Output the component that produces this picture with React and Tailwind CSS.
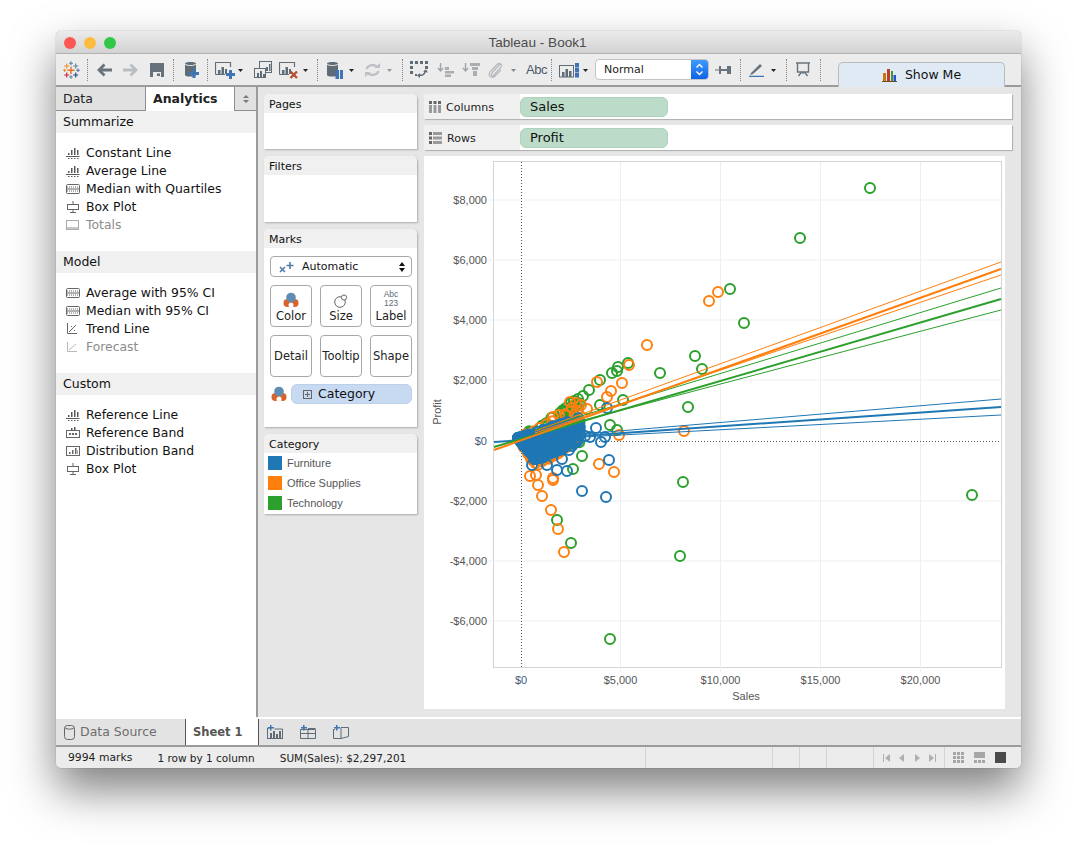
import React from "react";

const BLUE = "#1f77b4", ORANGE = "#ff7f0e", GREEN = "#2ca02c";
const G = "#5f6b75";

const green = [[870,188],[800,238],[730,289],[744,323],[660,373],[695,356],[702,369],[688,407],[628,363],[618,367],[617,371],[612,373],[600,380],[589,390],[623,400],[600,405],[610,425],[617,430],[582,456],[573,469],[683,482],[972,495],[680,556],[571,543],[557,520],[610,639],[583,396],[578,399],[574,401],[571,403],[566,408],[560,413]];
const orange = [[709,301],[718,292],[647,345],[629,365],[622,383],[611,391],[607,397],[597,382],[684,431],[619,435],[599,464],[614,472],[553,480],[553,478],[538,485],[542,496],[551,510],[558,529],[564,552],[530,476],[536,475],[570,402],[576,403],[587,409],[581,405],[572,408],[547,424],[553,417],[559,415]];
const blue = [[607,408],[596,428],[590,437],[601,442],[605,437],[577,441],[569,450],[562,459],[609,460],[532,465],[547,465],[557,470],[567,471],[582,491],[606,497],[572,446],[560,450],[585,436]];

function mulberry(a) {
  return () => {
    a |= 0; a = (a + 0x6d2b79f5) | 0;
    let t = Math.imul(a ^ (a >>> 15), 1 | a);
    t = (t + Math.imul(t ^ (t >>> 7), 61 | t)) ^ t;
    return ((t ^ (t >>> 14)) >>> 0) / 4294967296;
  };
}
function fan(seed, n, xMax, upS, lowS, peak, dec, pow) {
  const r = mulberry(seed), out = [];
  for (let i = 0; i < n; i++) {
    const d = Math.pow(r(), pow) * xMax;
    const up = 438 - upS * d;
    const low = 438 + (d < peak ? lowS * d : lowS * peak - (d - peak) * dec);
    out.push([518 + d, up + (low - up) * r()]);
  }
  return out;
}
const gMass = fan(3, 90, 62, 0.62, 1.1, 22, 0.5, 1);
const oMass = fan(7, 120, 60, 0.5, 1.6, 18, 0.6, 1.2);
const bMass = fan(11, 420, 62, 0.33, 1.35, 17, 0.45, 1.2);

function Rings({ pts, color }) {
  return pts.map(([x, y], i) => (
    <circle key={i} cx={x} cy={y} r="5" fill="none" stroke={color} strokeWidth="2" />
  ));
}

function Chart() {
  const vg = [620.5, 720.5, 820.5, 920.5];
  const hg = [200, 260, 320, 380, 501, 561, 621];
  const yl = [["$8,000",200],["$6,000",260],["$4,000",320],["$2,000",380],["$0",441],["-$2,000",501],["-$4,000",561],["-$6,000",621]];
  const xl = [["$0",521],["$5,000",620.5],["$10,000",720.5],["$15,000",820.5],["$20,000",920.5]];
  return (
    <svg width="581" height="553" viewBox="424 156 581 553" className="block" style={{ fontFamily: "'Liberation Sans', sans-serif" }}>
      <rect x="493.5" y="161.5" width="508" height="506" fill="#fff" stroke="#d4d4d4" />
      {vg.map((x) => <line key={x} x1={x} x2={x} y1="162" y2="672" stroke="#efefef" />)}
      {hg.map((y) => <line key={y} y1={y} y2={y} x1="488" x2="1001" stroke="#efefef" />)}
      <line x1="521.5" x2="521.5" y1="162" y2="667" stroke="#555" strokeDasharray="1 2" />
      <line x1="494" x2="1000" y1="441.5" y2="441.5" stroke="#555" strokeDasharray="1 2" />
      <Rings pts={gMass} color={GREEN} />
      <Rings pts={green} color={GREEN} />
      <Rings pts={oMass} color={ORANGE} />
      <Rings pts={orange} color={ORANGE} />
      <Rings pts={bMass} color={BLUE} />
      <Rings pts={blue} color={BLUE} />
      <path d="M535 438 L1001 399 M535 439.5 L1001 415" stroke={BLUE} fill="none" />
      <path d="M494 442 L1001 407" stroke={BLUE} strokeWidth="2" fill="none" />
      <path d="M535 430 L1001 288 M535 433 L1001 310" stroke={GREEN} fill="none" />
      <path d="M494 447 L1001 299" stroke={GREEN} strokeWidth="2" fill="none" />
      <path d="M535 431 L1001 262 M535 433 L1001 275" stroke={ORANGE} fill="none" />
      <path d="M494 450 L1001 269" stroke={ORANGE} strokeWidth="2.100" fill="none" />
      {yl.map(([t, y]) => (
        <text key={t} x="487" y={y + 4} textAnchor="end" fontSize="11" fill={t === "$0" ? "#44587a" : "#555"}>{t}</text>
      ))}
      {xl.map(([t, x]) => (
        <text key={t} x={x} y="684" textAnchor="middle" fontSize="11" fill={t === "$0" ? "#44587a" : "#555"}>{t}</text>
      ))}
      <text x="746" y="700" textAnchor="middle" fontSize="11" fill="#555">Sales</text>
      <text transform="translate(441 412) rotate(-90)" textAnchor="middle" fontSize="11" fill="#555">Profit</text>
    </svg>
  );
}

const Ic = ({ w = 16, h = 16, children, className = "" }) => (
  <svg width={w} height={h} viewBox={`0 0 ${w} ${h}`} className={`shrink-0 block ${className}`}>{children}</svg>
);
const Caret = ({ c = "#222" }) => (
  <svg width="5" height="3" viewBox="0 0 5 3" className="shrink-0 block mt-[1px]"><path d="M0 0h5L2.5 3z" fill={c} /></svg>
);
const Sep = () => <div className="w-[1px] h-[22px] border-l border-dotted border-[#888] shrink-0" />;
const Gap = ({ w }) => <div className="shrink-0" style={{ width: w }} />;

const Bars = ({ x = 0, y = 0, c = G }) => (
  <g transform={`translate(${x} ${y})`} fill="none" stroke={c}>
    <path d="M.5 12.500V.5h15V5" strokeWidth="1.200" />
    <path d="M.5 12.500H10" />
    <path d="M3 12V8h2.500v4zM6.500 12V5H9v7zM10 12V7h2v5z" fill={c} stroke="none" />
  </g>
);

const Plus = ({ x, y, s, c }) => (
  <path d={`M${x - s} ${y}H${x + s}M${x} ${y - s}V${y + s}`} stroke={c} strokeWidth={s > 2.5 ? 1.5 : 1.1} fill="none" />
);

function Toolbar() {
  return (
    <div className="h-[33px] flex items-center bg-[#ececec] border-b-2 border-[#9b9b9b] relative pl-[7px] shrink-0">
      <Ic w={17} h={18}>
        <Plus x={8} y={2.3} s={2} c="#5b879b" />
        <Plus x={12.7} y={5} s={2.5} c="#5b879b" />
        <Plus x={3.7} y={5} s={2.5} c="#eb912b" />
        <Plus x={8} y={9.3} s={3.6} c="#e8762b" />
        <Plus x={1.6} y={9.3} s={1.6} c="#eb912b" />
        <Plus x={15} y={9.3} s={1.8} c="#4e79a7" />
        <Plus x={3.7} y={14} s={2.5} c="#c72035" />
        <Plus x={12.7} y={14} s={2.5} c="#1f447f" />
        <Plus x={8} y={16} s={1.8} c="#5b879b" />
      </Ic>
      <Gap w={7} /><Sep /><Gap w={9} />
      <Ic w={15} h={14}><path d="M15 7H2M7.500 1.500 2 7l5.500 5.500" stroke="#69737c" strokeWidth="2.800" fill="none" /></Ic>
      <Gap w={11} />
      <Ic w={15} h={14}><path d="M0 7h13M7.500 1.500 13 7l-5.500 5.500" stroke="#b9bec3" strokeWidth="2.800" fill="none" /></Ic>
      <Gap w={12} />
      <Ic w={14} h={14}><path d="M0 0h14v14H0z" fill="#66717b" /><path d="M3 9h8v5H3z" fill="#ececec" /><path d="M7 10.500h3V13H7z" fill="#66717b" /></Ic>
      <Gap w={9} /><Sep /><Gap w={11} />
      <Ic w={14} h={17}><path d="M0 2.500C0 .5 11 .5 11 2.500V14c0 2-11 2-11 0z" fill="#5f6b75" /><path d="M0 3c1 2 10 2 11 0" stroke="#ececec" fill="none" /><path d="M4 11h3.500V7.500h3V11H14v3h-3.500v3h-3v-3H4z" fill="#3f75b4" /></Ic>
      <Gap w={8} /><Sep /><Gap w={7} />
      <Ic w={20} h={18}><Bars y={1} /><path d="M11 12h3V9h3v3h3v3h-3v3h-3v-3h-3z" fill="#3f75b4" /></Ic>
      <Gap w={3} /><Caret />
      <Gap w={11} />
      <Ic w={18} h={18}><rect x="5.500" y=".5" width="12" height="11" fill="#ececec" stroke={G} /><rect x=".5" y="7.500" width="11" height="9" fill="#ececec" stroke={G} /><path d="M3 16v-4h2v4zM6 16v-6h2v6zM9 16v-3h2v3zM12 10V6h2v4zM15 10V3h1.500v7z" fill={G} /></Ic>
      <Gap w={7} />
      <Ic w={19} h={18}><Bars y={1} /><path d="M11.500 10.500l6.500 6.500m0-6.500-6.500 6.500" stroke="#b4502f" strokeWidth="2.400" /></Ic>
      <Gap w={5} /><Caret />
      <Gap w={9} /><Sep /><Gap w={9} />
      <Ic w={16} h={18}><path d="M0 2.500C0 .5 11 .5 11 2.500V14c0 2-11 2-11 0z" fill="#5f6b75" /><path d="M0 3c1 2 10 2 11 0" stroke="#ececec" fill="none" /><path d="M8.500 9H12v9H8.500zM13 9h3v9h-3z" fill="#3f75b4" /></Ic>
      <Gap w={6} /><Caret />
      <Gap w={11} />
      <Ic w={15} h={14}><path d="M1.500 6a6 5 0 0 1 10-2.500M13.500 8a6 5 0 0 1-10 2.500" stroke="#bdc1c5" strokeWidth="2.400" fill="none" /><path d="M9.500 5H15V0zM5.500 9H0v5z" fill="#bdc1c5" /></Ic>
      <Gap w={7} /><Caret c="#999" />
      <Gap w={10} /><Sep /><Gap w={7} />
      <Ic w={18} h={17}><path d="M0 0h3v3H0zM5 0h3v3H5zM10 0h3v3h-3zM15 0h3v3h-3zM0 5h3v3H0zM0 10h3v3H0zM5 13h2v2H5zM15 5h3v3h-3z" fill={G} /><path d="M15 9a4 4 0 0 1-5 5" stroke={G} strokeWidth="1.500" fill="none" /><path d="M13 11l3-2.500 2 3zM10 12v5l-3-2.500z" fill={G} /></Ic>
      <Gap w={9} />
      <Ic w={17} h={15}><path d="M3.500 1v8M1 6l2.500 3L6 6" stroke="#9fa5ab" strokeWidth="1.400" fill="none" /><path d="M8 5h4v3H8zM8 9h9v2.500H8zM8 12.500h6V15H8z" fill="#a9aeb3" /></Ic>
      <Gap w={8} />
      <Ic w={18} h={15}><path d="M3.500 1v8M1 6l2.500 3L6 6" stroke="#9fa5ab" strokeWidth="1.400" fill="none" /><path d="M8 1h10v3H8zM10 5h6v3h-6zM11 9h4v5h-4z" fill="#a9aeb3" /></Ic>
      <Gap w={7} />
      <Ic w={16} h={17}><path d="M13 3 5 12c-2 2 0 4 2 2l7-8c1.500-2-1-5-3.500-3L3 11c-3 4 2 7 5 4l6-6" stroke="#b5b9bd" strokeWidth="1.200" fill="none" /></Ic>
      <Gap w={8} /><Caret c="#888" />
      <Gap w={10} />
      <span className="text-[13px] text-[#4d5a6a] font-['Liberation_Sans',sans-serif] w-[20px] leading-none tracking-[-0.5px] whitespace-nowrap">Abc</span>
      <Gap w={5} /><Sep /><Gap w={7} />
      <Ic w={20} h={16}><rect x=".5" y="3.500" width="14" height="11.500" fill="none" stroke={G} /><path d="M3 15v-5h2.500v5zM6.500 15V7H9v8zM10 15V9h2.500v6z" fill={G} /><path d="M16 1h4v4.500h-4zM16 6h4v4.500h-4zM16 11h4v4.500h-4z" fill="#3f75b4" /></Ic>
      <Gap w={4} /><Caret />
      <Gap w={7} />
      <div className="w-[114px] h-[21px] rounded-[4px] bg-white border border-[#c4c4c4] flex items-center relative overflow-hidden shrink-0">
        <span className="text-[11px] text-[#222] pl-[8px] font-['DejaVu_Sans',sans-serif] leading-none">Normal</span>
        <div className="absolute right-0 top-0 bottom-0 w-[17px] bg-gradient-to-b from-[#3f9bfb] to-[#0f62e6] flex items-center justify-center">
          <svg width="9" height="13" viewBox="0 0 9 13"><path d="M1.500 4.500 4.500 1.500l3 3M1.500 8.500l3 3 3-3" stroke="#fff" strokeWidth="1.400" fill="none" /></svg>
        </div>
      </div>
      <Gap w={6} />
      <Ic w={16} h={12}><path d="M0 5.500h4V2h2v3h6V2h4v8h-4V7H6v3H4V6.500H0z" fill="#69737c" /></Ic>
      <Gap w={9} /><Sep /><Gap w={8} />
      <Ic w={15} h={15}><path d="M2 11 11 2l2 2-9 8-3 1z" fill="#69737c" /><path d="M0 14.500h15" stroke="#3f75b4" strokeWidth="1.500" /></Ic>
      <Gap w={7} /><Caret />
      <Gap w={10} /><Sep /><Gap w={8} />
      <Ic w={16} h={15}><path d="M1 1h14M2.500 1v9h11V1M8 10v2M3.500 14l3-4M12.500 14l-3-4" stroke="#69737c" strokeWidth="1.400" fill="none" /></Ic>
      <Gap w={9} /><Sep />
      <div className="absolute left-[782px] bottom-[-2px] w-[167px] h-[25px] bg-[#dfeaf5] border border-b-0 border-[#b8bcc0] rounded-t-[5px] flex items-center justify-center gap-[8px]">
        <svg width="15" height="14" viewBox="0 0 15 14" className="block">
          <path d="M1 5h3v8H1z" fill="#c7770a" /><path d="M5 1h3v12H5z" fill="#c0392b" /><path d="M9 3h2v10H9z" fill="#3a9a32" /><path d="M11.500 7H14v6h-2.500z" fill="#2a4fd6" /><path d="M0 13.500h15" stroke="#6b4f1d" />
        </svg>
        <span className="text-[12.500px] text-[#111] font-['DejaVu_Sans',sans-serif] leading-none">Show Me</span>
      </div>
    </div>
  );
}

const ic = {
  line: <Ic w={14} h={12}><path d="M8 1h1.500v7H8zM5 3h1.500v5H5zM11 3h1.500v5H11zM2 6h1.500v2H2zM0 9h13.500v1H0zM2 11h1.500v1H2zM5 11h1.500v1H5zM8 11h1.500v1H8zM11 11h1.500v1H11z" fill="#5a5a5a" /></Ic>,
  quart: <Ic w={14} h={12}><rect x=".5" y="1.500" width="13" height="9" rx="1" fill="none" stroke="#666" /><path d="M1 4h12M1 8h12" stroke="#666" strokeDasharray="1 1" /><path d="M1 6h12" stroke="#666" /></Ic>,
  box: <Ic w={14} h={12}><path d="M7 0v3M7 9v3M4 11.500h6" stroke="#666" fill="none" /><rect x="1.500" y="3.500" width="11" height="5" fill="none" stroke="#666" /></Ic>,
  totals: <Ic w={14} h={12}><rect x=".5" y="1.500" width="12" height="9" fill="none" stroke="#aaa" /><path d="M1 8h11v2H1z" fill="#c8c8c8" /></Ic>,
  trend: <Ic w={14} h={12}><path d="M1.500 0v10.500H11M3 9l7-7" stroke="#666" fill="none" /><path d="M5 3h1v1H5zM8 7h1v1H8z" fill="#666" /></Ic>,
  forecast: <Ic w={14} h={12}><path d="M1.500 1v9.500H11M3 9l7-6" stroke="#b9b9b9" fill="none" /></Ic>,
  band: <Ic w={14} h={12}><path d="M8 0h1.500v3H8zM5 1h1.500v2H5z" fill="#5a5a5a" /><rect x=".5" y="3.500" width="13" height="7" fill="none" stroke="#666" /><path d="M3 6h2v2H3zM6 6h2v2H6zM9 6h2v2H9z" fill="#666" /></Ic>,
  dist: <Ic w={14} h={12}><rect x=".5" y="1.500" width="13" height="9" fill="none" stroke="#666" /><path d="M3 7h1.500v2H3zM6 5h1.500v4H6zM9 3h1.500v6H9zM11.500 5H12v4h-.5z" fill="#666" /></Ic>,
};

function Section({ title, items }) {
  return (
    <div>
      <div className="h-[22px] bg-[#f0f0f0] flex items-center pl-[7px] pt-[1px] text-[12.500px] text-[#111] leading-none">{title}</div>
      <div className="pt-[11px] pb-[17px]">
        {items.map(([t, i, dis]) => (
          <div key={t} className="h-[18px] flex items-center pl-[10px] gap-[6px]">
            <div className="w-[14px] flex justify-center">{i}</div>
            <span className={`text-[12.400px] leading-none ${dis ? "text-[#8c8c8c]" : "text-[#111]"}`}>{t}</span>
          </div>
        ))}
      </div>
    </div>
  );
}

function LeftPane() {
  return (
    <div className="w-[202px] shrink-0 bg-white border-r-2 border-[#9b9b9b] flex flex-col">
      <div className="h-[24px] flex bg-[#e1e1e1] shrink-0">
        <div className="w-[90px] border-b border-r border-[#8f8f8f] flex items-center pl-[7px] pt-[2px] text-[12.500px] text-[#222]">Data</div>
        <div className="w-[89px] bg-white flex items-center pl-[7px] pt-[1px] text-[12.500px] font-bold text-[#222] border-r border-[#8f8f8f]">Analytics</div>
        <div className="flex-1 border-b border-[#8f8f8f] flex items-center justify-center">
          <svg width="6" height="8" viewBox="0 0 6 8"><path d="M3 0l3 3H0zM3 8 0 5h6z" fill="#777" /></svg>
        </div>
      </div>
      <Section title="Summarize" items={[["Constant Line", ic.line], ["Average Line", ic.line], ["Median with Quartiles", ic.quart], ["Box Plot", ic.box], ["Totals", ic.totals, true]]} />
      <Section title="Model" items={[["Average with 95% CI", ic.quart], ["Median with 95% CI", ic.quart], ["Trend Line", ic.trend], ["Forecast", ic.forecast, true]]} />
      <Section title="Custom" items={[["Reference Line", ic.line], ["Reference Band", ic.band], ["Distribution Band", ic.dist], ["Box Plot", ic.box]]} />
    </div>
  );
}

const Card = ({ title, className = "", children }) => (
  <div className={`w-[153px] bg-white rounded-t-[5px] shadow-[1px_1px_2px_rgba(0,0,0,0.25)] ${className}`}>
    <div className="h-[19px] bg-[#f0f0f0] rounded-t-[5px] flex items-center pl-[5px] pt-[1px] text-[11px] text-[#111] leading-none">{title}</div>
    {children}
  </div>
);

const ColorIcon = () => (
  <svg width="16" height="16" viewBox="0 0 16 16" className="block">
    <circle cx="4.500" cy="11" r="4" fill="#d9622b" /><circle cx="11.500" cy="11" r="4" fill="#d9622b" />
    <circle cx="8" cy="13" r="2.500" fill="#fff" />
    <circle cx="8" cy="5.500" r="4.800" fill="#5f8db4" />
  </svg>
);

const MarkBtn = ({ icon, label }) => (
  <div className={`w-[42px] h-[42px] rounded-[4px] border border-[#a8a8a8] bg-white flex flex-col items-center ${icon ? "justify-end pb-[3px]" : "justify-center"} gap-[1px]`}>
    {icon}
    <span className="text-[11.500px] text-[#222] leading-[14px]">{label}</span>
  </div>
);

function Marks() {
  return (
    <Card title="Marks" className="h-[198px]">
      <div className="px-[6px] pt-[8px]">
        <div className="h-[21px] w-[142px] rounded-[4px] border border-[#a8a8a8] flex items-center pl-[8px] pr-[6px] text-[11px] text-[#111]">
          <svg width="16" height="12" viewBox="0 0 16 12" className="block mr-[7px]">
            <path d="M1 6l5 5m0-5-5 5" stroke="#4f7ba8" strokeWidth="1.600" /><path d="M11 1v7M7.500 4.500h7" stroke="#4f7ba8" strokeWidth="1.600" />
          </svg>
          <span className="flex-1 leading-none">Automatic</span>
          <svg width="6" height="10" viewBox="0 0 6 10"><path d="M3 0l3 4H0zM3 10 0 6h6z" fill="#111" /></svg>
        </div>
        <div className="grid grid-cols-[42px_42px_42px] gap-x-[8px] gap-y-[8px] mt-[8px]">
          <MarkBtn label="Color" icon={<ColorIcon />} />
          <MarkBtn label="Size" icon={<svg width="14" height="14" viewBox="0 0 14 14" className="block"><circle cx="6" cy="8" r="5.300" fill="none" stroke="#666" /><circle cx="10" cy="3.500" r="2.600" fill="#fff" stroke="#666" /></svg>} />
          <div className="w-[42px] h-[42px] rounded-[4px] border border-[#a8a8a8] flex flex-col items-center justify-end pb-[3px]">
            <span className="text-[8.500px] text-[#5f6b75] leading-[8.500px] font-['Liberation_Sans',sans-serif]">Abc</span>
            <span className="text-[8.500px] text-[#5f6b75] leading-[8.500px] font-['Liberation_Sans',sans-serif]">123</span>
            <span className="text-[11.500px] text-[#222] leading-[14px] mt-[2px]">Label</span>
          </div>
          <MarkBtn label="Detail" />
          <MarkBtn label="Tooltip" />
          <MarkBtn label="Shape" />
        </div>
      </div>
      <div className="flex items-center pl-[7px] mt-[7px] gap-[4px]">
        <ColorIcon />
        <div className="w-[121px] h-[20px] rounded-[6px] bg-[#c8d9f2] border border-[#bdd0ea] flex items-center pl-[11px] gap-[6px]">
          <svg width="9" height="9" viewBox="0 0 9 9" className="block"><rect x=".5" y=".5" width="8" height="8" fill="none" stroke="#666" /><path d="M2 4.500h5M4.500 2v5" stroke="#666" /></svg>
          <span className="text-[12.500px] text-[#111] leading-none pt-[1px]">Category</span>
        </div>
      </div>
    </Card>
  );
}

function Legend() {
  const items = [["Furniture", BLUE], ["Office Supplies", ORANGE], ["Technology", GREEN]];
  return (
    <Card title="Category" className="h-[80px]">
      <div className="pl-[4px] pt-[3px] flex flex-col gap-[6px]">
        {items.map(([t, c]) => (
          <div key={t} className="h-[14px] flex items-center gap-[5px]">
            <div className="w-[14px] h-[14px]" style={{ background: c }} />
            <span className="text-[11px] text-[#555] font-['Liberation_Sans',sans-serif] leading-none">{t}</span>
          </div>
        ))}
      </div>
    </Card>
  );
}

function Shelf({ label, value, icon }) {
  return (
    <div className="h-[25px] w-[588px] bg-white shadow-[1px_1px_1px_rgba(0,0,0,0.25)] flex items-center rounded-tl-[4px]">
      <div className="w-[96px] h-full bg-[#f0f0f0] rounded-tl-[4px] flex items-center pl-[5px] gap-[5px] shrink-0">
        {icon}
        <span className="text-[11px] text-[#222] leading-none pt-[1px]">{label}</span>
      </div>
      <div className="w-[148px] h-[20px] rounded-[6px] bg-[#bcdcc9] border border-[#aed2bd] flex items-center pl-[9px] text-[13px] text-[#111] leading-none">{value}</div>
    </div>
  );
}

function Main() {
  return (
    <div className="flex-1 bg-[#e6e6e6] flex pl-[6px] pt-[7px] min-w-0">
      <div className="w-[160px] shrink-0 flex flex-col gap-[7px]">
        <Card title="Pages" className="h-[55px]" />
        <Card title="Filters" className="h-[66px]" />
        <Marks />
        <Legend />
      </div>
      <div className="flex-1 flex flex-col min-w-0">
        <div className="flex flex-col gap-[6px]">
          <Shelf label="Columns" value="Sales" icon={<svg width="12" height="12" viewBox="0 0 12 12" className="block"><path d="M0 0h3v3H0zM4.500 0h3v3h-3zM9 0h3v3H9z" fill="#666" /><path d="M0 4h3v8H0zM4.500 4h3v8h-3zM9 4h3v8H9z" fill="#9a9a9a" /></svg>} />
          <Shelf label="Rows" value="Profit" icon={<svg width="13" height="12" viewBox="0 0 13 12" className="block"><path d="M0 0h3v3H0zM0 4.500h3v3H0zM0 9h3v3H0z" fill="#666" /><path d="M4 0h9v3H4zM4 4.500h9v3H4zM4 9h9v3H4z" fill="#9a9a9a" /></svg>} />
        </div>
        <div className="mt-[6px] w-[581px] bg-white"><Chart /></div>
      </div>
    </div>
  );
}

function TabBar() {
  return (
    <div className="h-[30px] bg-[#e3e3e3] border-t-2 border-[#fff] border-b-2 border-b-[#9b9b9b] flex items-stretch shrink-0">
      <div className="w-[130px] flex items-center pl-[8px] gap-[5px] border-r border-[#555]">
        <svg width="11" height="15" viewBox="0 0 11 15" className="block"><rect x=".5" y=".5" width="10" height="14" rx="3" fill="none" stroke="#666" /><path d="M1 3c2 1.500 7 1.500 9 0" stroke="#666" fill="none" /></svg>
        <span className="text-[12.500px] text-[#6d6d6d] leading-none pt-[1px]">Data Source</span>
      </div>
      <div className="w-[73px] bg-white flex items-center pl-[7px] pt-[1px] border-r border-[#555] text-[11.500px] font-bold text-[#555] leading-none">Sheet 1</div>
      <div className="flex items-center pl-[8px] gap-[17px]">
        <svg width="16" height="14" viewBox="0 0 16 14" className="block"><path d="M.5 13V3h2M15.500 13V4h-8" stroke="#5f6b75" fill="none" /><path d="M0 13h16v1H0zM3 8h2v5H3zM6 6h2v7H6zM9 9h2v4H9zM12 6h2v7h-2z" fill="#5f6b75" /><path d="M3 0h1.500v2H7v1.500H4.500V5.500H3V3.500H1V2h2z" fill="#3f75b4" /></svg>
        <svg width="16" height="14" viewBox="0 0 16 14" className="block"><path d="M.5 4.500h15v9H.5zM.5 8.500h15M8 4.500v9M8 3.500h7.500" stroke="#5f6b75" fill="none" /><path d="M3 0h1.500v2H7v1.500H4.500V5.500H3V3.500H1V2h2z" fill="#3f75b4" /></svg>
        <svg width="16" height="14" viewBox="0 0 16 14" className="block"><path d="M.5 4.500v9H8l7.500-2V2.500H8v11M.5 4.500H2" stroke="#5f6b75" fill="none" /><path d="M3 0h1.500v2H7v1.500H4.500V5.500H3V3.500H1V2h2z" fill="#3f75b4" /></svg>
      </div>
    </div>
  );
}

function StatusBar() {
  const Cell = ({ w }) => <div className="h-full border-r border-[#d4d4d4] shrink-0" style={{ width: w }} />;
  return (
    <div className="h-[21px] bg-[#ececec] flex items-center shrink-0 text-[10.500px] text-[#222] rounded-b-[5px]">
      <span className="ml-[12px] pt-[1px] leading-none text-[10.800px]">9994 marks</span>
      <span className="ml-[25px] pt-[1px] leading-none">1 row by 1 column</span>
      <span className="ml-[25px] pt-[1px] leading-none">SUM(Sales): $2,297,201</span>
      <div className="flex-1 h-full border-r border-[#d4d4d4]" />
      <Cell w={127} /><Cell w={27} /><Cell w={27} /><Cell w={47} />
      <div className="w-[71px] h-full border-r border-[#d4d4d4] flex items-center justify-center gap-[9px]">
        <svg width="7" height="8" viewBox="0 0 7 8"><path d="M0 0h1v8H0zM7 0v8L2 4z" fill="#b0b0b0" /></svg>
        <svg width="6" height="8" viewBox="0 0 6 8"><path d="M5 0v8L0 4z" fill="#b0b0b0" /></svg>
        <svg width="6" height="8" viewBox="0 0 6 8"><path d="M1 0v8l5-4z" fill="#b0b0b0" /></svg>
        <svg width="7" height="8" viewBox="0 0 7 8"><path d="M0 0v8l5-4zM6 0h1v8H6z" fill="#b0b0b0" /></svg>
      </div>
      <div className="w-[76px] flex items-center pl-[8px] gap-[10px]">
        <svg width="11" height="11" viewBox="0 0 11 11"><path d="M0 0h3v3H0zM4 0h3v3H4zM8 0h3v3H8zM0 4h3v3H0zM4 4h3v3H4zM8 4h3v3H8zM0 8h3v3H0zM4 8h3v3H4zM8 8h3v3H8z" fill="#a6a6a6" /></svg>
        <svg width="11" height="11" viewBox="0 0 11 11"><path d="M0 0h11v6H0zM0 8h3v3H0zM4 8h3v3H4zM8 8h3v3H8z" fill="#a6a6a6" /></svg>
        <div className="w-[11px] h-[11px] bg-[#4a4a4a]" />
      </div>
    </div>
  );
}

export default function App() {
  return (
    <div className="w-[1077px] h-[848px] bg-white pl-[56px] pt-[31px] overflow-hidden font-['DejaVu_Sans',sans-serif]">
      <div className="w-[965px] h-[737px] rounded-[5px] flex flex-col shadow-[0_22px_45px_rgba(0,0,0,0.5),0_0_1px_rgba(0,0,0,0.5)] bg-[#ececec]">
        <div className="h-[23px] shrink-0 rounded-t-[5px] bg-gradient-to-b from-[#ebebeb] to-[#d3d3d3] border-b border-[#b2b2b2] relative flex items-center justify-center pt-[2px] pr-[2px]">
          <div className="absolute left-[8px] top-[6px] flex gap-[8px]">
            <div className="w-[12px] h-[12px] rounded-full bg-[#fc5753]" />
            <div className="w-[12px] h-[12px] rounded-full bg-[#fdbc40]" />
            <div className="w-[12px] h-[12px] rounded-full bg-[#33c748]" />
          </div>
          <span className="text-[13.600px] text-[#4c4c4c] leading-none font-['Liberation_Sans',sans-serif]">Tableau - Book1</span>
        </div>
        <Toolbar />
        <div className="flex-1 flex min-h-0">
          <LeftPane />
          <Main />
        </div>
        <TabBar />
        <StatusBar />
      </div>
    </div>
  );
}
